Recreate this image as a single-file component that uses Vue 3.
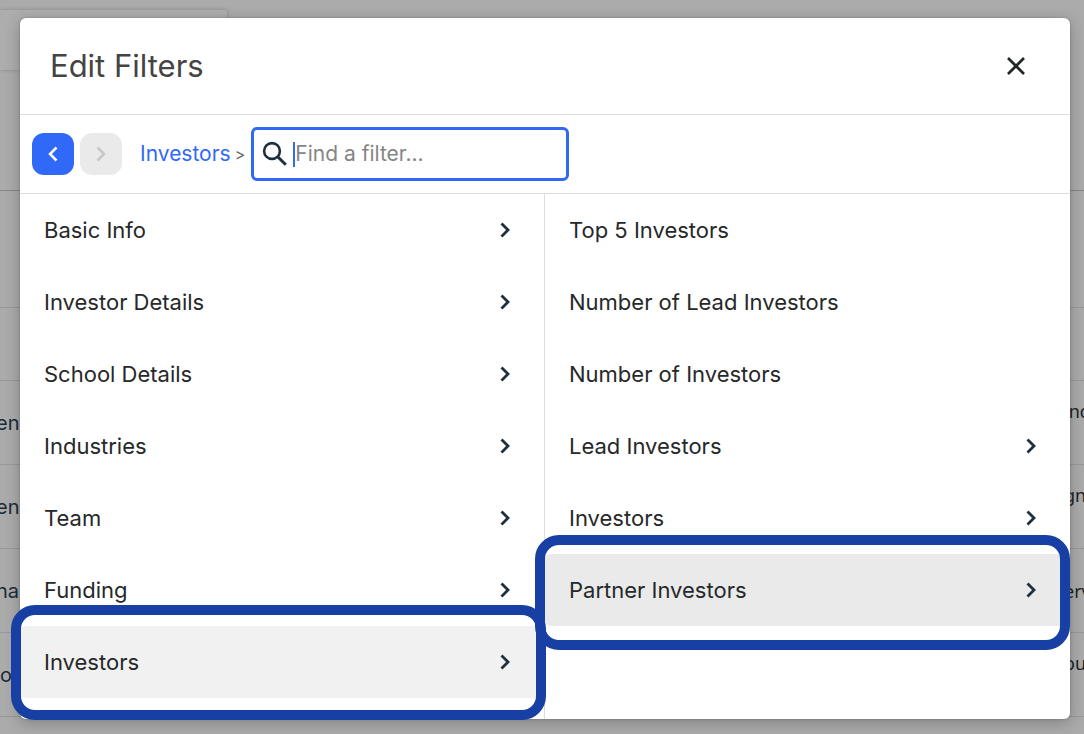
<script setup>
import { ref } from 'vue'

const query = ref('')

const categories = [
  { label: 'Basic Info' },
  { label: 'Investor Details' },
  { label: 'School Details' },
  { label: 'Industries' },
  { label: 'Team' },
  { label: 'Funding' },
  { label: 'Investors', selected: true },
]

const filters = [
  { label: 'Top 5 Investors' },
  { label: 'Number of Lead Investors' },
  { label: 'Number of Investors' },
  { label: 'Lead Investors', nested: true },
  { label: 'Investors', nested: true },
  { label: 'Partner Investors', nested: true, selected: true },
]

const tableRows = [
  { name: 'en', about: 'ind', scrolled: true, multiline: true },
  { name: 'en', about: 'gn', scrolled: true, multiline: true },
  { name: 'nar', about: 'erv', scrolled: true, multiline: false },
  { name: 'o', about: 'ou', scrolled: false, multiline: true },
]
</script>

<template>
  <div class="screen">
    <div class="backdrop" aria-hidden="true">
      <div class="topbar"><div class="tab"></div></div>
      <div class="spacer"></div>
      <div class="head"></div>
      <div class="subhead"></div>
      <div v-for="(row, i) in tableRows" :key="i" class="record">
        <span class="name" :class="{ scrolled: row.scrolled }">{{ row.name }}</span>
        <span class="about" :class="{ multiline: row.multiline }">{{ row.about }}</span>
      </div>
    </div>

    <section class="dialog" role="dialog" aria-labelledby="dialog-title">
      <header class="dialog-header">
        <h1 id="dialog-title">Edit Filters</h1>
        <button class="close" type="button" aria-label="Close">
          <svg width="20" height="20" viewBox="0 0 20 20">
            <path d="M2 2 18 18M18 2 2 18" stroke="#212525" stroke-width="2.7" fill="none" />
          </svg>
        </button>
      </header>

      <div class="toolbar">
        <button class="nav back" type="button" aria-label="Back">
          <svg width="12" height="16" viewBox="0 0 12 16">
            <path d="M9.5 1.5 3 8l6.5 6.5" stroke="currentColor" stroke-width="2.5" fill="none" />
          </svg>
        </button>
        <button class="nav forward" type="button" aria-label="Forward" disabled>
          <svg width="12" height="16" viewBox="0 0 12 16">
            <path d="M2.5 1.5 9 8l-6.5 6.5" stroke="currentColor" stroke-width="2.5" fill="none" />
          </svg>
        </button>
        <nav class="crumbs" aria-label="Breadcrumb">
          <a href="#investors">Investors</a>
          <span class="separator">&gt;</span>
        </nav>
        <label class="search">
          <svg width="26" height="26" viewBox="0 0 26 26">
            <circle cx="10" cy="10" r="7.9" stroke="#1d3040" stroke-width="2.6" fill="none" />
            <path d="m15.5 15.5 8.3 8.3" stroke="#1d3040" stroke-width="3" fill="none" />
          </svg>
          <span class="caret"></span>
          <input v-model="query" type="text" placeholder="Find a filter..." aria-label="Find a filter" />
        </label>
      </div>

      <div class="columns">
        <ul class="column">
          <li v-for="item in categories" :key="item.label">
            <button class="option" :class="{ selected: item.selected }" type="button">
              <span>{{ item.label }}</span>
              <svg width="12" height="16" viewBox="0 0 12 16">
                <path d="M2.5 1.5 9 8l-6.5 6.5" stroke="#1d3040" stroke-width="2.8" fill="none" />
              </svg>
            </button>
            <span v-if="item.selected" class="ring ring-category"></span>
          </li>
        </ul>
        <ul class="column">
          <li v-for="item in filters" :key="item.label">
            <button class="option" :class="{ hovered: item.selected }" type="button">
              <span>{{ item.label }}</span>
              <svg v-if="item.nested" width="12" height="16" viewBox="0 0 12 16">
                <path d="M2.5 1.5 9 8l-6.5 6.5" stroke="#1d3040" stroke-width="2.8" fill="none" />
              </svg>
            </button>
            <span v-if="item.selected" class="ring ring-filter"></span>
          </li>
        </ul>
      </div>
    </section>
  </div>
</template>

<style>
body {
  background: #ababab;
}
</style>

<style scoped>
.screen {
  display: grid;
  min-height: 100vh;
  overflow: hidden;
  color: #262829;
  font-family: Inter, "Liberation Sans", sans-serif;
  font-size: 21px;
  line-height: 24px;
}

.screen * {
  box-sizing: border-box;
}

.backdrop {
  grid-area: 1 / 1;
  min-width: 0;
  background: #ababab;
}

.topbar {
  padding-top: 10px;
}

.tab {
  width: 227px;
  height: 60px;
  border-radius: 0 3px 0 0;
  background: #adadad;
  box-shadow: 0 0 4px rgba(0, 0, 0, 0.2);
}

.spacer {
  height: 121px;
  border-bottom: 1px solid #878787;
}

.head {
  height: 117px;
  border-bottom: 1px solid #989898;
}

.subhead {
  height: 73px;
  border-bottom: 1px solid #989898;
}

.record {
  display: flex;
  align-items: center;
  justify-content: space-between;
  height: 84px;
  border-bottom: 1px solid #989898;
}

.name {
  color: #1c2b38;
  font-size: 20px;
}

.scrolled {
  text-indent: -4px;
}

.about {
  width: 20px;
  color: #222222;
  font-family: "Noto Sans", sans-serif;
  font-size: 18px;
  white-space: nowrap;
}

.multiline {
  height: 48px;
}

.dialog {
  grid-area: 1 / 1;
  display: flex;
  flex-direction: column;
  min-width: 0;
  margin: 18px 14px 15px 20px;
  border-radius: 6px;
  background: #ffffff;
  box-shadow: 0 4px 16px rgba(0, 0, 0, 0.24), 0 0 3px rgba(0, 0, 0, 0.2);
  z-index: 1;
}

button {
  border: 0;
  padding: 0;
  background: none;
  color: inherit;
  font: inherit;
}

svg {
  display: block;
  flex: none;
}

.dialog-header {
  display: flex;
  align-items: center;
  justify-content: space-between;
  height: 97px;
  padding: 0 44px 0 30px;
  border-bottom: 1px solid #dddddd;
}

h1 {
  margin: 0;
  color: #444444;
  font-size: 31px;
  font-weight: 400;
  line-height: 36px;
}

.toolbar {
  display: flex;
  align-items: center;
  gap: 6px;
  height: 79px;
  padding: 0 12px;
  border-bottom: 1px solid #dddddd;
}

.nav {
  display: grid;
  place-items: center;
  width: 42px;
  height: 42px;
  border-radius: 12px;
}

.back {
  background: #3069f7;
  color: #ffffff;
}

.forward {
  background: #eaeaea;
  color: #c8c8c8;
}

.crumbs {
  display: flex;
  align-items: center;
  gap: 4px;
  padding-left: 12px;
}

.crumbs a {
  color: #3069f7;
  text-decoration: none;
}

.separator {
  color: #666666;
  font-size: 16px;
}

.search {
  display: flex;
  align-items: center;
  width: 318px;
  height: 54px;
  padding: 0 8px;
  border: 3px solid #3069f7;
  border-radius: 6px;
}

.caret {
  flex: none;
  width: 2px;
  height: 25px;
  margin-left: 5px;
  background: #3069f7;
}

input {
  flex: 1;
  min-width: 0;
  padding: 0;
  border: 0;
  outline: 0;
  background: none;
  color: #262829;
  font: inherit;
}

input::placeholder {
  color: #858585;
  opacity: 1;
}

.columns {
  display: grid;
  grid-template-columns: 1fr 1fr;
  flex: 1;
}

.column {
  margin: 0;
  padding: 0 0 21px;
  list-style: none;
}

.column:first-child {
  border-right: 1px solid #dddddd;
}

li {
  position: relative;
}

.option {
  display: flex;
  align-items: center;
  justify-content: space-between;
  width: 100%;
  height: 72px;
  padding: 0 33px 0 24px;
  border-radius: 6px;
  font-size: 22px;
  text-align: left;
}

.selected {
  background: #f1f1f1;
}

.hovered {
  background: #eaeaea;
}

.ring {
  position: absolute;
  z-index: 1;
  border: 10px solid #183fa3;
  border-radius: 24px;
  pointer-events: none;
}

.ring-category {
  inset: -21px -2px -22px -9px;
}

.ring-filter {
  inset: -19px 0 -24px -10px;
}
</style>
